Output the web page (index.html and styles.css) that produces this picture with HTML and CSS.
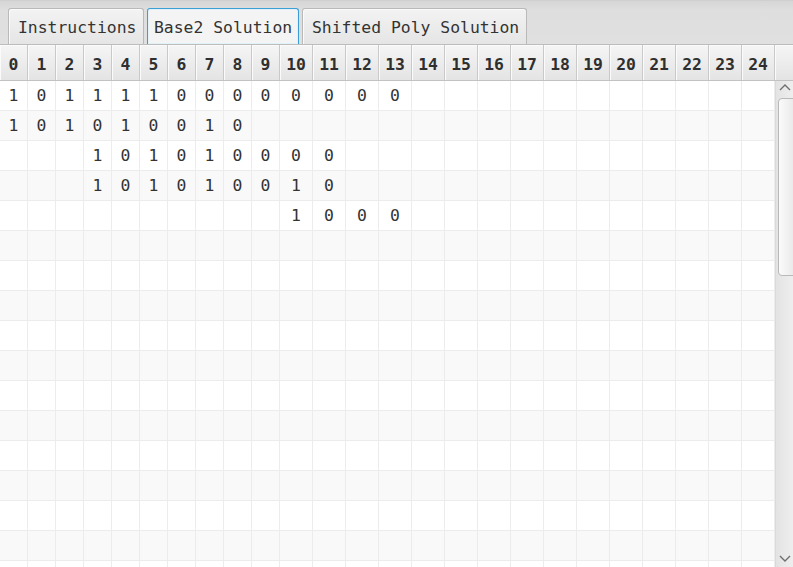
FILE: index.html
```html
<!DOCTYPE html>
<html>
<head>
<meta charset="utf-8">
<link rel="stylesheet" href="styles.css">
</head>
<body>
<div class="app">
  <div class="tabbar">
    <div class="tab tab-instructions">Instructions</div>
    <div class="tab tab-base2 selected">Base2 Solution</div>
    <div class="tab tab-shifted">Shifted Poly Solution</div>
  </div>
  <div class="header">
    <span>0</span><span>1</span><span>2</span><span>3</span><span>4</span><span>5</span><span>6</span><span>7</span><span>8</span><span>9</span><span>10</span><span>11</span><span>12</span><span>13</span><span>14</span><span>15</span><span>16</span><span>17</span><span>18</span><span>19</span><span>20</span><span>21</span><span>22</span><span>23</span><span>24</span><span class="filler"></span>
  </div>
  <div class="body">
    <div class="grid">
      <div class="row"><span>1</span><span>0</span><span>1</span><span>1</span><span>1</span><span>1</span><span>0</span><span>0</span><span>0</span><span>0</span><span>0</span><span>0</span><span>0</span><span>0</span><span></span><span></span><span></span><span></span><span></span><span></span><span></span><span></span><span></span><span></span><span></span></div>
      <div class="row"><span>1</span><span>0</span><span>1</span><span>0</span><span>1</span><span>0</span><span>0</span><span>1</span><span>0</span><span></span><span></span><span></span><span></span><span></span><span></span><span></span><span></span><span></span><span></span><span></span><span></span><span></span><span></span><span></span><span></span></div>
      <div class="row"><span></span><span></span><span></span><span>1</span><span>0</span><span>1</span><span>0</span><span>1</span><span>0</span><span>0</span><span>0</span><span>0</span><span></span><span></span><span></span><span></span><span></span><span></span><span></span><span></span><span></span><span></span><span></span><span></span><span></span></div>
      <div class="row"><span></span><span></span><span></span><span>1</span><span>0</span><span>1</span><span>0</span><span>1</span><span>0</span><span>0</span><span>1</span><span>0</span><span></span><span></span><span></span><span></span><span></span><span></span><span></span><span></span><span></span><span></span><span></span><span></span><span></span></div>
      <div class="row"><span></span><span></span><span></span><span></span><span></span><span></span><span></span><span></span><span></span><span></span><span>1</span><span>0</span><span>0</span><span>0</span><span></span><span></span><span></span><span></span><span></span><span></span><span></span><span></span><span></span><span></span><span></span></div>
      <div class="row"><span></span><span></span><span></span><span></span><span></span><span></span><span></span><span></span><span></span><span></span><span></span><span></span><span></span><span></span><span></span><span></span><span></span><span></span><span></span><span></span><span></span><span></span><span></span><span></span><span></span></div>
      <div class="row"><span></span><span></span><span></span><span></span><span></span><span></span><span></span><span></span><span></span><span></span><span></span><span></span><span></span><span></span><span></span><span></span><span></span><span></span><span></span><span></span><span></span><span></span><span></span><span></span><span></span></div>
      <div class="row"><span></span><span></span><span></span><span></span><span></span><span></span><span></span><span></span><span></span><span></span><span></span><span></span><span></span><span></span><span></span><span></span><span></span><span></span><span></span><span></span><span></span><span></span><span></span><span></span><span></span></div>
      <div class="row"><span></span><span></span><span></span><span></span><span></span><span></span><span></span><span></span><span></span><span></span><span></span><span></span><span></span><span></span><span></span><span></span><span></span><span></span><span></span><span></span><span></span><span></span><span></span><span></span><span></span></div>
      <div class="row"><span></span><span></span><span></span><span></span><span></span><span></span><span></span><span></span><span></span><span></span><span></span><span></span><span></span><span></span><span></span><span></span><span></span><span></span><span></span><span></span><span></span><span></span><span></span><span></span><span></span></div>
      <div class="row"><span></span><span></span><span></span><span></span><span></span><span></span><span></span><span></span><span></span><span></span><span></span><span></span><span></span><span></span><span></span><span></span><span></span><span></span><span></span><span></span><span></span><span></span><span></span><span></span><span></span></div>
      <div class="row"><span></span><span></span><span></span><span></span><span></span><span></span><span></span><span></span><span></span><span></span><span></span><span></span><span></span><span></span><span></span><span></span><span></span><span></span><span></span><span></span><span></span><span></span><span></span><span></span><span></span></div>
      <div class="row"><span></span><span></span><span></span><span></span><span></span><span></span><span></span><span></span><span></span><span></span><span></span><span></span><span></span><span></span><span></span><span></span><span></span><span></span><span></span><span></span><span></span><span></span><span></span><span></span><span></span></div>
      <div class="row"><span></span><span></span><span></span><span></span><span></span><span></span><span></span><span></span><span></span><span></span><span></span><span></span><span></span><span></span><span></span><span></span><span></span><span></span><span></span><span></span><span></span><span></span><span></span><span></span><span></span></div>
      <div class="row"><span></span><span></span><span></span><span></span><span></span><span></span><span></span><span></span><span></span><span></span><span></span><span></span><span></span><span></span><span></span><span></span><span></span><span></span><span></span><span></span><span></span><span></span><span></span><span></span><span></span></div>
      <div class="row"><span></span><span></span><span></span><span></span><span></span><span></span><span></span><span></span><span></span><span></span><span></span><span></span><span></span><span></span><span></span><span></span><span></span><span></span><span></span><span></span><span></span><span></span><span></span><span></span><span></span></div>
      <div class="row"><span></span><span></span><span></span><span></span><span></span><span></span><span></span><span></span><span></span><span></span><span></span><span></span><span></span><span></span><span></span><span></span><span></span><span></span><span></span><span></span><span></span><span></span><span></span><span></span><span></span></div>
    </div>
    <div class="vscroll">
      <div class="arrow up"><svg width="12" height="7" viewBox="0 0 12 7"><path d="M1 6 L6 1 L11 6" fill="none" stroke="#6f6f6f" stroke-width="1.4"/></svg></div>
      <div class="thumb"></div>
      <div class="track-space"></div>
      <div class="arrow down"><svg width="12" height="7" viewBox="0 0 12 7"><path d="M1 1 L6 6 L11 1" fill="none" stroke="#6f6f6f" stroke-width="1.4"/></svg></div>
    </div>
  </div>
</div>
</body>
</html>
```

FILE: styles.css
```css
* { box-sizing: border-box; }

html, body {
  margin: 0;
  padding: 0;
  background: #ffffff;
}

body {
  width: 793px;
  height: 567px;
  overflow: hidden;
  font-family: "DejaVu Sans Mono", "Liberation Mono", monospace;
  color: #333333;
}

.app {
  width: 793px;
  height: 567px;
  display: flex;
  flex-direction: column;
  overflow: hidden;
}

/* ---------- tabs ---------- */
.tabbar {
  height: 44px;
  flex: none;
  display: flex;
  align-items: flex-end;
  gap: 3px;
  padding-left: 8px;
  background: linear-gradient(#d6d6d6, #dedede 20%, #e0e0e0);
  border-top: 1px solid #cfcfcf;
}

.tab {
  height: 36px;
  display: flex;
  align-items: center;
  padding-left: 9px;
  padding-top: 2px;
  font-size: 16.4px;
  color: #333333;
  white-space: nowrap;
  overflow: hidden;
  border: 1px solid #b9b9b9;
  border-bottom: none;
  border-radius: 3px 3px 0 0;
  background: linear-gradient(#f3f3f3, #e5e5e5);
  box-shadow: inset 1px 1px 0 #fafafa;
}

.tab-instructions { width: 136px; }
.tab-base2 { width: 152px; padding-left: 6px; }
.tab-shifted { width: 225px; }

.tab.selected {
  border-color: #3b9fd6;
  background: #f4f4f4;
  box-shadow: inset 0 0 0 1px #e3f1f9;
}

/* ---------- header ---------- */
.header {
  flex: none;
  height: 37px;
  display: grid;
  grid-template-columns: repeat(10, 28px) repeat(15, 33px) 18px;
  border-top: 1px solid #bcbcbc;
  border-bottom: 1px solid #c2c2c2;
  background: #e6e6e6;
}

.header span {
  display: flex;
  align-items: center;
  justify-content: center;
  padding-top: 3px;
  font-size: 16.4px;
  font-weight: bold;
  color: #2f2f2f;
  border-right: 1px solid #c9c9c9;
  background: linear-gradient(#f5f5f5, #e4e4e4);
  box-shadow: inset 1px 1px 0 #fbfbfb;
}

.header .filler {
  border-right: none;
}

/* ---------- body ---------- */
.body {
  flex: 1;
  display: flex;
  overflow: hidden;
}

.grid {
  width: 775px;
  flex: none;
  overflow: hidden;
}

.row {
  height: 30px;
  display: grid;
  grid-template-columns: repeat(10, 28px) repeat(15, 33px);
  border-bottom: 1px solid #ececec;
  background: #ffffff;
}

.row:nth-child(even) {
  background: #f9f9f9;
}

.row span {
  display: flex;
  align-items: center;
  justify-content: center;
  font-size: 16.4px;
  color: #333333;
  border-right: 1px solid #ececec;
}

/* ---------- scrollbar ---------- */
.vscroll {
  width: 18px;
  flex: none;
  display: flex;
  flex-direction: column;
  background: linear-gradient(to right, #e3e3e3, #eeeeee);
  border-left: 1px solid #dadada;
  overflow: hidden;
}

.arrow {
  flex: none;
  height: 17px;
  display: flex;
  justify-content: center;
  align-items: flex-start;
}

.arrow.up {
  padding-top: 3px;
}

.arrow.down {
  height: 14px;
  padding-top: 2px;
}

.thumb {
  flex: none;
  height: 178px;
  margin-left: 2px;
  width: 18px;
  border: 1px solid #b9b9b9;
  border-radius: 4px 0 0 4px;
  background: linear-gradient(to right, #fbfbfb, #e8e8e8);
}

.track-space {
  flex: 1;
}
```
